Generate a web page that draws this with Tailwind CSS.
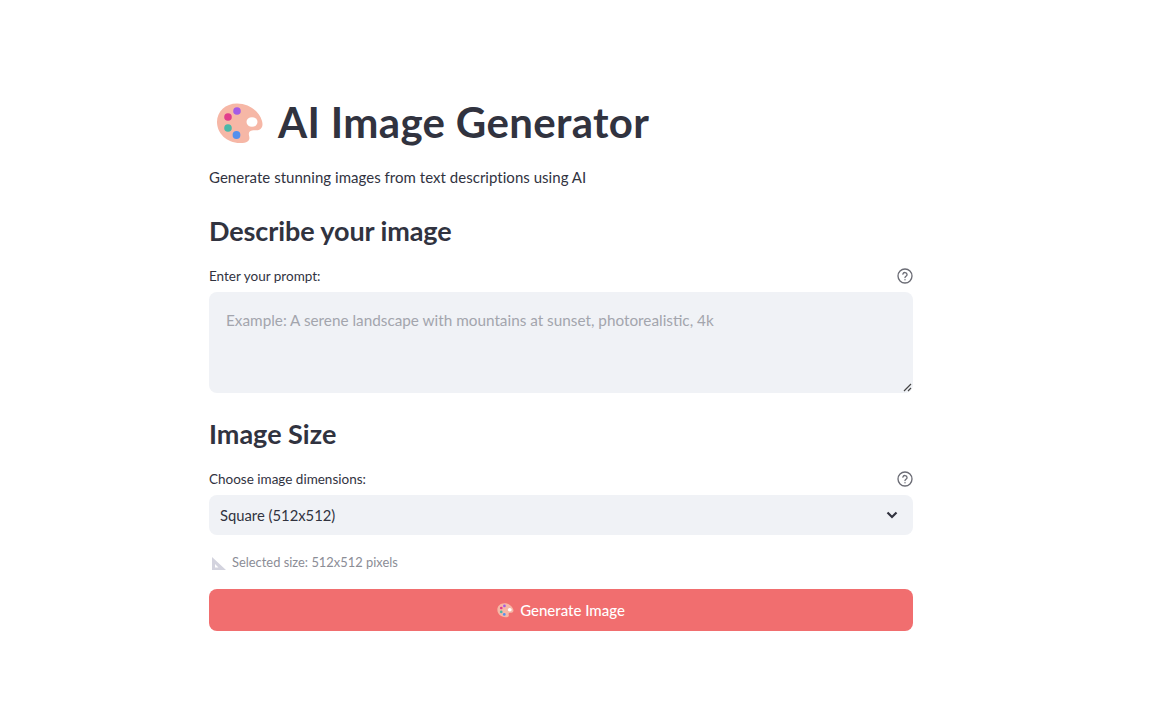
<!DOCTYPE html>
<html lang="en">
<head>
  <meta charset="UTF-8" />
  <meta name="viewport" content="width=device-width, initial-scale=1.0"/>
  <title>AI Image Generator</title>
  <script src="https://cdn.jsdelivr.net/npm/@tailwindcss/browser@4"></script>
</head>
<body class="bg-white min-h-screen font-['Lato','Noto_Sans',sans-serif] text-[#31333f]">

<!-- Palette icon, used in the title and the button -->
<svg class="hidden">
  <symbol id="palette" viewBox="0 0 48 42">
    <path d="M21 .5C9.500.5 1 8.500 1 19c0 11 9.500 21 23 21 3.500 0 6-.5 7.500-1.500 2.500-1.500 2-4 1.500-6-.5-2.500 0-4.500 3-5 3-.5 6 .5 8.500-1.500 2-1.500 2.500-4.500 1.500-8C43 8 33 .5 21 .5z" fill="#f6b7a6"/>
    <ellipse cx="36" cy="19" rx="5.500" ry="4.800" fill="#fff"/>
    <circle cx="21" cy="8" r="3.800" fill="#a45be6"/>
    <circle cx="12" cy="14" r="3.800" fill="#e23d8c"/>
    <circle cx="12" cy="25" r="3.800" fill="#4ab8a8"/>
    <circle cx="20.500" cy="32" r="3.900" fill="#5590ee"/>
  </symbol>
</svg>

<main class="ml-[209px] w-[704px] pt-[95px]">

  <!-- Title -->
  <div class="flex items-center h-[54px]">
    <svg class="w-[48px] h-[42px] ml-[7px] mr-[14px] mt-[4px]"><use href="#palette"/></svg>
    <h1 class="text-[42px] leading-[54px] font-bold tracking-[0.33px] whitespace-nowrap">AI Image Generator</h1>
  </div>
  <p class="mt-[16px] text-[15px] leading-[24px] tracking-[0.03px]">Generate stunning images from text descriptions using AI</p>

  <!-- Prompt -->
  <h2 class="mt-[24px] text-[27px] leading-[36px] font-bold tracking-[-0.1px]">Describe your image</h2>
  <div class="mt-[17px] flex items-center justify-between h-[20px]">
    <label class="text-[13.5px] leading-[20px]">Enter your prompt:</label>
    <svg class="w-[16px] h-[16px] text-[#6b6c75]" viewBox="0 0 24 24" fill="none" stroke="currentColor" stroke-width="2" stroke-linecap="round">
      <circle cx="12" cy="12" r="10.500"/>
      <path d="M8.800 9.200a3.200 3.200 0 0 1 6.300.8c0 2.200-3.100 2.600-3.100 4.400"/>
      <path d="M12 17.600v.2"/>
    </svg>
  </div>
  <div class="mt-[6px] relative h-[101px] bg-[#f0f2f6] rounded-lg px-[17px] py-[16px]">
    <p class="text-[15.300px] leading-[24px] text-[#a3a5ad]">Example: A serene landscape with mountains at sunset, photorealistic, 4k</p>
    <svg class="absolute right-[1px] bottom-[1px] w-[9px] h-[9px] text-[#444]" viewBox="0 0 9 9" fill="none" stroke="currentColor" stroke-width="1.200">
      <path d="M1 8 8 1M5 8l3-3"/>
    </svg>
  </div>

  <!-- Size -->
  <h2 class="mt-[23px] text-[27px] leading-[36px] font-bold">Image Size</h2>
  <div class="mt-[17px] flex items-center justify-between h-[20px]">
    <label class="text-[13.500px] leading-[20px]">Choose image dimensions:</label>
    <svg class="w-[16px] h-[16px] text-[#6b6c75]" viewBox="0 0 24 24" fill="none" stroke="currentColor" stroke-width="2" stroke-linecap="round">
      <circle cx="12" cy="12" r="10.500"/>
      <path d="M8.800 9.200a3.200 3.200 0 0 1 6.300.8c0 2.200-3.100 2.600-3.100 4.400"/>
      <path d="M12 17.600v.2"/>
    </svg>
  </div>
  <div class="mt-[6px] h-[40px] bg-[#f0f2f6] rounded-lg pl-[11px] pr-[15px] flex items-center justify-between">
    <span class="text-[14.800px]">Square (512x512)</span>
    <svg class="w-[12px] h-[8px]" viewBox="0 0 12 8" fill="none" stroke="#31333f" stroke-width="2.200">
      <path d="M1.500 1.500 6 6l4.500-4.500"/>
    </svg>
  </div>

  <!-- Caption -->
  <div class="mt-[18px] flex items-center h-[20px] text-[12.900px] text-[#8b8d96]">
    <svg class="w-[14px] h-[13px] ml-[3px] mr-[6px]" viewBox="0 0 14 13">
      <path fill-rule="evenodd" d="M0 0l14 13H0zM3 7v3.500h3.500z" fill="#d3d3de"/>
    </svg>
    <span>Selected size: 512x512 pixels</span>
  </div>

  <!-- Button -->
  <button class="mt-[16px] w-full h-[42px] bg-[#f16e6f] rounded-lg text-white text-[15px] font-medium flex items-center justify-center">
    <svg class="w-[17px] h-[15px] mr-[6px]"><use href="#palette"/></svg>
    Generate Image
  </button>
</main>

</body>
</html>
